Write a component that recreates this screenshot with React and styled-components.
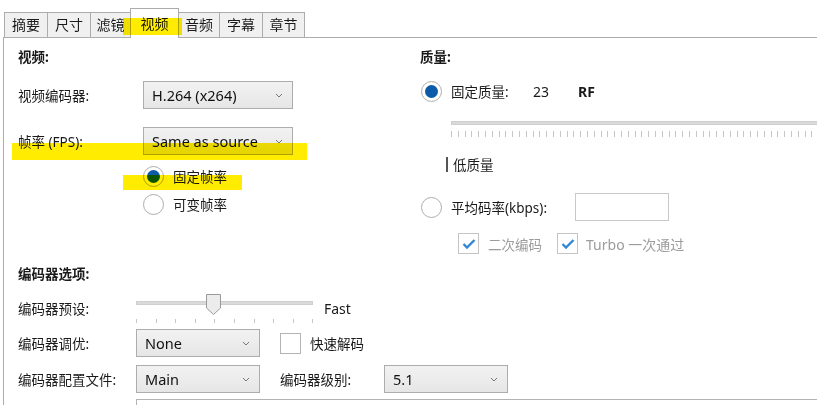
import styled, { createGlobalStyle } from 'styled-components'

const GlobalStyle = createGlobalStyle`
  html, body { margin: 0; padding: 0; background: #fff; }
  body {
    font-family: "Noto Sans", "Noto Sans CJK SC", sans-serif;
    font-size: 13.5px;
    color: #1a1a1a;
  }
`

const Page = styled.div`
  position: relative;
  width: 817px;
  height: 405px;
  overflow: hidden;
`

const TabBar = styled.div`
  display: flex;
  align-items: flex-end;
  height: 37px;
  padding-left: 4px;
`

const Tab = styled.div`
  box-sizing: border-box;
  position: relative;
  z-index: ${p => (p.$active ? 2 : 1)};
  width: ${p => p.$w}px;
  height: ${p => (p.$active ? 30 : 25)}px;
  margin: 0 0 ${p => (p.$active ? -1 : 0)}px -1px;
  border: 1px solid #acacac;
  border-bottom: none;
  background: ${p => (p.$active ? '#fff' : '#f0f0f0')};
  display: flex;
  justify-content: center;
  padding-top: ${p => (p.$active ? 6 : 3)}px;
  line-height: 18px;
  font-size: 14px;
  &:first-child { margin-left: 0; }
`

const Panel = styled.div`
  margin-left: 3px;
  height: 380px;
  border-left: 1px solid #adadad;
  border-top: 1px solid #adadad;
  padding: 9px 0 0 14px;
`

const TopGrid = styled.div`
  display: grid;
  grid-template-columns: 402px 1fr;
`

const Column = styled.div`
  display: flex;
  flex-direction: column;
`

const Title = styled.div`
  height: 20px;
  line-height: 20px;
  font-weight: bold;
  font-size: 13.5px;
  margin-top: ${p => p.$mt || 0}px;
`

const Row = styled.div`
  display: flex;
  align-items: center;
  height: ${p => p.$h || 28}px;
  margin-top: ${p => p.$mt || 0}px;
  padding-left: ${p => p.$pl || 0}px;
`

const Label = styled.div`
  width: ${p => p.$w}px;
  flex-shrink: 0;
  white-space: nowrap;
  margin-left: ${p => p.$ml || 0}px;
`

const SelectBox = styled.div`
  box-sizing: border-box;
  width: ${p => p.$w}px;
  height: 28px;
  border: 1px solid #adadad;
  background: linear-gradient(#f2f2f2, #e6e6e6);
  display: flex;
  align-items: center;
  justify-content: space-between;
  padding: 0 9px 0 8px;
  font-size: 14.5px;
  color: #111;
`

const Chevron = () => (
  <svg width="8" height="5" viewBox="0 0 8 5">
    <polyline points="1,1 4,4 7,1" fill="none" stroke="#777" strokeWidth="1" />
  </svg>
)

const Select = ({ w, value }) => (
  <SelectBox $w={w}>
    <span>{value}</span>
    <Chevron />
  </SelectBox>
)

const RadioCircle = styled.div`
  box-sizing: border-box;
  width: 21px;
  height: 21px;
  border-radius: 50%;
  border: 1px solid #aeaeae;
  background: #fff;
  display: flex;
  align-items: center;
  justify-content: center;
  flex-shrink: 0;
  &::after {
    content: '';
    display: ${p => (p.$checked ? 'block' : 'none')};
    width: 13px;
    height: 13px;
    border-radius: 50%;
    background: #0c5ba8;
  }
`

const OptionText = styled.span`
  margin-left: ${p => p.$ml ?? 9}px;
  width: ${p => (p.$w ? `${p.$w}px` : 'auto')};
  flex-shrink: 0;
  white-space: nowrap;
  color: ${p => (p.$muted ? '#9c9c9c' : 'inherit')};
  font-weight: ${p => (p.$bold ? 'bold' : 'normal')};
  font-size: ${p => p.$fs || 13.5}px;
`

const CheckBox = styled.div`
  box-sizing: border-box;
  width: 21px;
  height: 21px;
  border: 1px solid ${p => (p.$checked ? '#c4c4c4' : '#b4b4b4')};
  background: #fff;
  display: flex;
  align-items: center;
  justify-content: center;
  flex-shrink: 0;
  margin-left: ${p => p.$ml || 0}px;
`

const Check = () => (
  <svg width="14" height="12" viewBox="0 0 14 12">
    <polyline points="1.5,6 5,9.5 12.5,2" fill="none" stroke="#3385d6" strokeWidth="2.4" />
  </svg>
)

const TextInput = styled.div`
  box-sizing: border-box;
  width: 94px;
  height: 28px;
  border: 1px solid #c9c9c9;
`

const QualitySlider = styled.div`
  margin: 16px 0 0 31px;
`

const Track = styled.div`
  box-sizing: border-box;
  height: 4px;
  width: ${p => p.$w}px;
  background: #dadada;
  border: 1px solid #cfcfcf;
`

const Ticks = styled.div`
  width: ${p => p.$w}px;
  height: ${p => p.$h}px;
  margin-top: ${p => p.$mt}px;
  background: repeating-linear-gradient(
    to right,
    #c6c6c6 0,
    #c6c6c6 1px,
    transparent 1px,
    transparent ${p => p.$step}px
  );
`

const LowLabel = styled.div`
  display: flex;
  align-items: center;
  height: 20px;
  margin: 17px 0 0 26px;
  &::before {
    content: '';
    width: 2px;
    height: 15px;
    background: #555;
    margin-right: 5px;
  }
`

const PresetSlider = styled.div`
  position: relative;
  width: 177px;
  height: 28px;
  padding-top: 7px;
  box-sizing: border-box;
`

const Thumb = styled.svg`
  position: absolute;
  left: 70px;
  top: 0;
`

const BottomBox = styled.div`
  margin: 6px 0 0 118px;
  height: 20px;
  border-top: 1px solid #b3b3b3;
  border-left: 1px solid #b3b3b3;
`

const Highlight = styled.div`
  position: absolute;
  left: ${p => p.$x}px;
  top: ${p => p.$y}px;
  width: ${p => p.$w}px;
  height: ${p => p.$h}px;
  background: #ffec00;
  mix-blend-mode: multiply;
  z-index: 5;
  pointer-events: none;
`

const tabs = [
  ['摘要', 44],
  ['尺寸', 44],
  ['滤镜', 41],
  ['视频', 49],
  ['音频', 42],
  ['字幕', 44],
  ['章节', 43],
]

export default function App() {
  return (
    <Page>
      <GlobalStyle />
      <TabBar>
        {tabs.map(([t, w]) => (
          <Tab key={t} $w={w} $active={t === '视频'}>{t}</Tab>
        ))}
      </TabBar>
      <Panel>
        <TopGrid>
          <Column>
            <Title>视频:</Title>
            <Row $mt={14}>
              <Label $w={125}>视频编码器:</Label>
              <Select w={150} value="H.264 (x264)" />
            </Row>
            <Row $mt={18}>
              <Label $w={125}>帧率 (FPS):</Label>
              <Select w={150} value="Same as source" />
            </Row>
            <Row $mt={7} $pl={125}>
              <RadioCircle $checked />
              <OptionText>固定帧率</OptionText>
            </Row>
            <Row $pl={125}>
              <RadioCircle />
              <OptionText>可变帧率</OptionText>
            </Row>
          </Column>
          <Column>
            <Title>质量:</Title>
            <Row $mt={10} $pl={1}>
              <RadioCircle $checked />
              <OptionText $w={82}>固定质量:</OptionText>
              <OptionText $ml={0} $w={45} $fs={14}>23</OptionText>
              <OptionText $ml={0} $fs={14} $bold>RF</OptionText>
            </Row>
            <QualitySlider>
              <Track $w={400} />
              <Ticks $w={400} $h={6} $mt={6} $step={6.8} />
            </QualitySlider>
            <LowLabel>低质量</LowLabel>
            <Row $mt={19} $pl={1}>
              <RadioCircle />
              <OptionText $w={124}>平均码率(kbps):</OptionText>
              <TextInput />
            </Row>
            <Row $mt={12} $h={21} $pl={38}>
              <CheckBox $checked><Check /></CheckBox>
              <OptionText $muted $ml={9} $w={69}>二次编码</OptionText>
              <CheckBox $checked><Check /></CheckBox>
              <OptionText $muted $ml={8} $fs={14}>Turbo 一次通过</OptionText>
            </Row>
          </Column>
        </TopGrid>
        <Title $mt={10}>编码器选项:</Title>
        <Row $mt={10}>
          <Label $w={118}>编码器预设:</Label>
          <PresetSlider>
            <Track $w={177} />
            <Ticks $w={178} $h={4} $mt={14} $step={19.6} />
            <Thumb width="15" height="21" viewBox="0 0 15 21">
              <path d="M0.5,0.5 H14.5 V14 L7.5,20.5 L0.5,14 Z" fill="#ececec" stroke="#9a9a9a" strokeWidth="1" />
            </Thumb>
          </PresetSlider>
          <OptionText $ml={11} $fs={14}>Fast</OptionText>
        </Row>
        <Row $mt={7}>
          <Label $w={118}>编码器调优:</Label>
          <Select w={124} value="None" />
          <CheckBox $ml={20} />
          <OptionText>快速解码</OptionText>
        </Row>
        <Row $mt={8}>
          <Label $w={118}>编码器配置文件:</Label>
          <Select w={124} value="Main" />
          <Label $w={104} $ml={20}>编码器级别:</Label>
          <Select w={124} value="5.1" />
        </Row>
        <BottomBox />
      </Panel>
      <Highlight $x={123} $y={18} $w={59} $h={17} />
      <Highlight $x={12} $y={143} $w={295} $h={17} />
      <Highlight $x={123} $y={175} $w={119} $h={15} />
    </Page>
  )
}
